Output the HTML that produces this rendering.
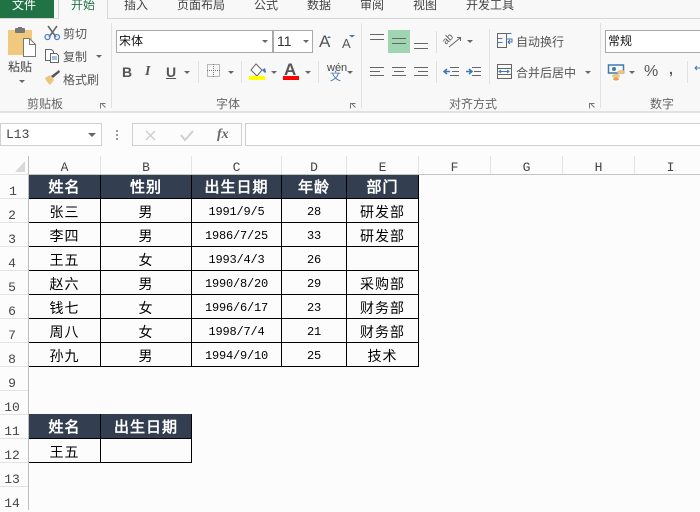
<!DOCTYPE html>
<html><head><meta charset="utf-8"><style>
html,body{margin:0;padding:0}
body{width:700px;height:510px;overflow:hidden;background:#fcfcfc;position:relative;font-family:"Liberation Sans","Noto Sans CJK SC",sans-serif;color:#444}
.t{position:absolute;white-space:nowrap;font-size:12px;line-height:16px;color:#444}
.tab{position:absolute;top:-4px;font-size:12px;line-height:18px;color:#444;white-space:nowrap}
.a{position:absolute;width:0;height:0;border-left:3px solid transparent;border-right:3px solid transparent;border-top:3px solid #666}
.r{position:absolute}
.c{position:absolute;text-align:center;font-family:"WenQuanYi Zen Hei","Liberation Sans",sans-serif;font-size:14px;letter-spacing:1px;color:#000;height:23px;line-height:26px;white-space:nowrap}
.h{color:#fff;font-weight:bold;font-size:15px;letter-spacing:1px;line-height:25px}
.d{font-size:12px;font-family:"Liberation Mono","DejaVu Sans Mono",monospace;letter-spacing:-.2px}
.hd{position:absolute;text-align:center;font-family:"Liberation Mono",monospace;font-size:13px;color:#444;line-height:16px}
.sv{position:absolute;left:0;top:0}
</style></head><body>
<div class="r" style="left:0;top:0;width:700px;height:112px;background:#f8f8f8"></div>
<div class="r" style="left:0;top:18px;width:700px;height:1px;background:#d6d6d6"></div>
<div class="r" style="left:0;top:111px;width:700px;height:2px;background:#e2e2e2"></div>
<div class="r" style="left:0;top:0;width:54px;height:18px;background:#217346"></div>
<div class="tab" style="left:12px;color:#fff">文件</div>
<div class="r" style="left:58px;top:0;width:50px;height:19px;background:#f8f8f8;border-left:1px solid #d6d6d6;border-right:1px solid #d6d6d6;box-sizing:border-box"></div>
<div class="tab" style="left:71px;color:#217346">开始</div>
<div class="tab" style="left:124px">插入</div>
<div class="tab" style="left:177px">页面布局</div>
<div class="tab" style="left:254px">公式</div>
<div class="tab" style="left:307px">数据</div>
<div class="tab" style="left:360px">审阅</div>
<div class="tab" style="left:413px">视图</div>
<div class="tab" style="left:466px">开发工具</div>

<svg class="sv" width="700" height="112" viewBox="0 0 700 112">
<g fill="#e0e0e0"><rect x="111" y="23" width="1" height="85"/><rect x="361" y="23" width="1" height="85"/><rect x="600" y="23" width="1" height="85"/>
<rect x="198" y="61" width="1" height="22"/><rect x="241" y="61" width="1" height="22"/><rect x="318" y="61" width="1" height="22"/><rect x="436" y="31" width="1" height="22"/><rect x="436" y="61" width="1" height="22"/><rect x="489" y="29" width="1" height="55"/><rect x="687" y="61" width="1" height="22"/></g>
<path d="M8 30h24v25H8z" fill="#f0c97f"/><rect x="15" y="28" width="10" height="5" rx="1" fill="#777"/><rect x="18" y="27" width="4" height="3" fill="#777"/>
<path d="M23.500 38.500h6l6 6v12h-12z" fill="#fff" stroke="#777"/><path d="M29.500 38.500v6h6" fill="none" stroke="#777"/>
<path d="M48 26l8 11M57 26l-8 11" stroke="#666" stroke-width="1.500" fill="none"/><circle cx="47.500" cy="37" r="2.500" fill="none" stroke="#4a86c5" stroke-width="1.300"/><circle cx="57" cy="37" r="2.500" fill="none" stroke="#4a86c5" stroke-width="1.300"/>
<path d="M45.500 49.500h6l2 2v9h-8z" fill="#fff" stroke="#666"/><path d="M50.500 53.500h6l2 2v7h-8z" fill="#fff" stroke="#666"/><path d="M52 57h5M52 59h5" stroke="#4a86c5"/>
<path d="M51 76l8-6 1 2-7 6z" fill="#555"/><path d="M45 78l5-3 4 5-4 5c-2-2-4-4-5-7z" fill="#edc57c"/>
<g fill="none" stroke="#777"><path d="M100.500 108.500v-5h5M102 104l3.500 3.500"/><path d="M350.500 108.500v-5h5M352 104l3.500 3.500"/><path d="M589.500 108.500v-5h5M591 104l3.500 3.500"/></g>
<rect x="116.500" y="30.500" width="156" height="22" fill="#fff" stroke="#a9a9a9"/><rect x="273.500" y="30.500" width="39" height="22" fill="#fff" stroke="#a9a9a9"/>
<rect x="605.500" y="30.500" width="110" height="22" fill="#fff" stroke="#a9a9a9"/>
<rect x="207.500" y="64.500" width="12" height="12" fill="none" stroke="#777" stroke-dasharray="1 1"/><path d="M207 70.500h13M213.500 64v13" stroke="#777" stroke-dasharray="1 1"/>
<path d="M256 64l6 6-5 6-6-6z" fill="#fff" stroke="#666"/><path d="M262 70l3-2 1 4-1 1z" fill="#3f78b5"/><rect x="249" y="76" width="16" height="4" fill="#ff0"/>
<rect x="283" y="76" width="16" height="4" fill="#f00"/>
<rect x="388" y="30" width="22" height="23" fill="#a0d5b2"/>
<g stroke="#666"><path d="M370 34.500h14M370 39.500h14M392 38.500h14M392 43.500h14M414 43.500h14M414 48.500h14"/>
<path d="M370 67.500h14M370 71.500h10M370 75.500h14M392 67.500h14M394 71.500h10M392 75.500h14M414 67.500h14M418 71.500h10M414 75.500h14"/>
<path d="M450 67.500h9M452 71.500h7M450 75.500h9M472 67.500h9M474 71.500h7M472 75.500h9"/></g>
<path d="M444 71.500h6M447 69l-3 2.500 3 2.500" stroke="#3f78b5" stroke-width="1.500" fill="none"/><path d="M466 71.500h6M469 69l3 2.500-3 2.500" stroke="#3f78b5" stroke-width="1.500" fill="none"/>
<text x="446" y="45" font-size="10" fill="#555" font-family="Liberation Sans" transform="rotate(-45 446 45)">ab</text>
<path d="M449 47l11-9M457 37.500h3.500v3.500" stroke="#666" fill="none"/>
<path d="M497.500 33.500h14M497.500 38.500h5M497.500 42.500h5" stroke="#3f78b5" fill="none"/><rect x="497.500" y="33.500" width="9" height="14" fill="none" stroke="#666"/><path d="M506 39h6v3h-4M510 40l-2 2 2 2" stroke="#3f78b5" fill="none"/>
<rect x="497.500" y="64.500" width="14" height="14" fill="none" stroke="#666"/><path d="M497 68.500h15M497 74.500h15" stroke="#666"/><path d="M499 71.500h10M501 70l-2 1.500 2 1.500M507 70l2 1.500-2 1.500" stroke="#3f78b5" fill="none"/>
<rect x="608.500" y="65" width="15" height="8" fill="none" stroke="#3f78b5" stroke-width="1.500"/><circle cx="614" cy="69" r="2" fill="#3f78b5"/><ellipse cx="621" cy="72" rx="4" ry="2" fill="#edc57c"/><ellipse cx="616" cy="76" rx="4" ry="2" fill="#edc57c"/><ellipse cx="616" cy="79" rx="3" ry="1.500" fill="#e0a64f"/>
<path d="M695 68h5M697 66l-2 2 2 2" stroke="#3f78b5" fill="none"/>
<path d="M329 36l-2 2h4zM349 35h6l-3 2.500z" fill="#3f78b5"/>
</svg>

<div class="a" style="left:19px;top:80px"></div><div class="a" style="left:96px;top:55px"></div>
<div class="a" style="left:184px;top:71px"></div><div class="a" style="left:228px;top:71px"></div><div class="a" style="left:262px;top:40px"></div><div class="a" style="left:303px;top:40px"></div>
<div class="a" style="left:271px;top:71px"></div><div class="a" style="left:305px;top:71px"></div><div class="a" style="left:347px;top:71px"></div><div class="a" style="left:467px;top:40px"></div><div class="a" style="left:585px;top:71px"></div><div class="a" style="left:629px;top:71px"></div>
<div class="t" style="left:8px;top:59px">粘贴</div>
<div class="t" style="left:63px;top:26px;color:#555">剪切</div>
<div class="t" style="left:63px;top:49px;color:#555">复制</div>
<div class="t" style="left:63px;top:72px;color:#555">格式刷</div>
<div class="t" style="left:27px;top:96px;color:#666">剪贴板</div>
<div class="t" style="left:216px;top:96px;color:#666">字体</div>
<div class="t" style="left:449px;top:96px;color:#666">对齐方式</div>
<div class="t" style="left:650px;top:96px;color:#666">数字</div>
<div class="t" style="left:119px;top:33px;color:#111">宋体</div>
<div class="t" style="left:277px;top:33px;font-size:14px;color:#333">11</div>
<div class="t" style="left:319px;top:34px;font-size:17px;color:#555">A</div>
<div class="t" style="left:342px;top:36px;font-size:13px;color:#555">A</div>
<div class="t" style="left:122px;top:64px;font-size:14px;font-weight:bold;color:#555">B</div>
<div class="t" style="left:145px;top:64px;font-size:14px;font-style:italic;font-family:'Liberation Serif',serif;font-weight:bold;color:#555">I</div>
<div class="t" style="left:166px;top:64px;font-size:14px;font-weight:bold;text-decoration:underline;color:#555">U</div>
<div class="t" style="left:284px;top:62px;font-size:17px;font-weight:bold;color:#555">A</div>
<div class="t" style="left:327px;top:62px;font-size:11px;line-height:12px;color:#444">wén</div>
<div class="t" style="left:330px;top:71px;font-size:11px;line-height:12px;color:#3f78b5">文</div>
<div class="t" style="left:516px;top:34px;color:#555">自动换行</div>
<div class="t" style="left:516px;top:65px;color:#555">合并后居中</div>
<div class="t" style="left:608px;top:33px;color:#111">常规</div>
<div class="t" style="left:644px;top:64px;font-size:16px;color:#555">%</div>
<div class="t" style="left:669px;top:61px;font-size:14px;font-weight:bold;color:#555">,</div>

<div class="r" style="left:0;top:113px;width:700px;height:43px;background:#fcfcfc"></div>
<div class="r" style="left:0;top:123px;width:102px;height:23px;box-sizing:border-box;border:1px solid #d0d0d0;background:#fff;font:13px/21px 'Liberation Mono',monospace;padding-left:5px;color:#444">L13</div>
<div class="a" style="left:88px;top:133px;border-left-width:4px;border-right-width:4px;border-top-width:4px"></div>
<div class="r" style="left:116px;top:130px;width:2px;height:2px;background:#999;box-shadow:0 4px #999,0 8px #999"></div>
<div class="r" style="left:132px;top:123px;width:110px;height:23px;box-sizing:border-box;border:1px solid #d0d0d0;background:#fcfcfc"></div>
<div class="r" style="left:245px;top:123px;width:470px;height:23px;box-sizing:border-box;border:1px solid #d0d0d0;background:#fff"></div>
<svg class="sv" width="700" height="156" style="pointer-events:none"><path d="M146 131l9 9M155 131l-9 9" stroke="#cfcfcf" stroke-width="1.500" fill="none"/><path d="M181 135l4 5 8-9" stroke="#cfcfcf" stroke-width="2" fill="none"/></svg>
<div class="t" style="left:217px;top:127px;font:italic bold 14px/16px 'Liberation Serif',serif;color:#666">fx</div>

<svg class="sv" width="700" height="510" style="top:0">
<g fill="#e3e3e3">
<rect x="0" y="174" width="28" height="1"/><rect x="0" y="198" width="28" height="1"/><rect x="0" y="222" width="28" height="1"/><rect x="0" y="246" width="28" height="1"/><rect x="0" y="270" width="28" height="1"/><rect x="0" y="294" width="28" height="1"/><rect x="0" y="318" width="28" height="1"/><rect x="0" y="342" width="28" height="1"/><rect x="0" y="366" width="28" height="1"/><rect x="0" y="390" width="28" height="1"/><rect x="0" y="414" width="28" height="1"/><rect x="0" y="438" width="28" height="1"/><rect x="0" y="462" width="28" height="1"/><rect x="0" y="486" width="28" height="1"/>
<rect x="100" y="156" width="1" height="18"/><rect x="191" y="156" width="1" height="18"/><rect x="281" y="156" width="1" height="18"/><rect x="346" y="156" width="1" height="18"/><rect x="418" y="156" width="1" height="18"/><rect x="490" y="156" width="1" height="18"/><rect x="562" y="156" width="1" height="18"/><rect x="634" y="156" width="1" height="18"/>
</g>
<rect x="28" y="156" width="1" height="354" fill="#bdbdbd"/><rect x="28" y="174" width="672" height="1" fill="#c4c4c4"/>
<path d="M25 161v11H15z" fill="#d9d9d9"/>
</svg>
<div class="hd" style="left:29px;top:160px;width:71px">A</div><div class="hd" style="left:101px;top:160px;width:90px">B</div><div class="hd" style="left:192px;top:160px;width:89px">C</div><div class="hd" style="left:282px;top:160px;width:64px">D</div><div class="hd" style="left:347px;top:160px;width:71px">E</div><div class="hd" style="left:419px;top:160px;width:71px">F</div><div class="hd" style="left:491px;top:160px;width:71px">G</div><div class="hd" style="left:563px;top:160px;width:71px">H</div><div class="hd" style="left:635px;top:160px;width:71px">I</div>
<div class="hd" style="left:0;top:184px;width:26px">1</div><div class="hd" style="left:0;top:208px;width:24px">2</div><div class="hd" style="left:0;top:232px;width:24px">3</div><div class="hd" style="left:0;top:256px;width:24px">4</div><div class="hd" style="left:0;top:280px;width:24px">5</div><div class="hd" style="left:0;top:304px;width:24px">6</div><div class="hd" style="left:0;top:328px;width:24px">7</div><div class="hd" style="left:0;top:352px;width:24px">8</div><div class="hd" style="left:0;top:376px;width:24px">9</div><div class="hd" style="left:0;top:400px;width:24px">10</div><div class="hd" style="left:0;top:424px;width:24px">11</div><div class="hd" style="left:0;top:448px;width:24px">12</div><div class="hd" style="left:0;top:472px;width:24px">13</div><div class="hd" style="left:0;top:496px;width:24px">14</div>

<div class="r" style="left:29px;top:175px;width:390px;height:24px;background:#333f50"></div>
<div class="c h" style="left:29px;top:175px;width:71px">姓名</div><div class="c h" style="left:101px;top:175px;width:90px">性别</div><div class="c h" style="left:192px;top:175px;width:89px">出生日期</div><div class="c h" style="left:282px;top:175px;width:64px">年龄</div><div class="c h" style="left:347px;top:175px;width:71px">部门</div>

<div class="c" style="left:29px;top:199px;width:71px">张三</div><div class="c" style="left:101px;top:199px;width:90px">男</div><div class="c d" style="left:192px;top:199px;width:89px">1991/9/5</div><div class="c d" style="left:282px;top:199px;width:64px">28</div><div class="c" style="left:347px;top:199px;width:71px">研发部</div>
<div class="c" style="left:29px;top:223px;width:71px">李四</div><div class="c" style="left:101px;top:223px;width:90px">男</div><div class="c d" style="left:192px;top:223px;width:89px">1986/7/25</div><div class="c d" style="left:282px;top:223px;width:64px">33</div><div class="c" style="left:347px;top:223px;width:71px">研发部</div>
<div class="c" style="left:29px;top:247px;width:71px">王五</div><div class="c" style="left:101px;top:247px;width:90px">女</div><div class="c d" style="left:192px;top:247px;width:89px">1993/4/3</div><div class="c d" style="left:282px;top:247px;width:64px">26</div>
<div class="c" style="left:29px;top:271px;width:71px">赵六</div><div class="c" style="left:101px;top:271px;width:90px">男</div><div class="c d" style="left:192px;top:271px;width:89px">1990/8/20</div><div class="c d" style="left:282px;top:271px;width:64px">29</div><div class="c" style="left:347px;top:271px;width:71px">采购部</div>
<div class="c" style="left:29px;top:295px;width:71px">钱七</div><div class="c" style="left:101px;top:295px;width:90px">女</div><div class="c d" style="left:192px;top:295px;width:89px">1996/6/17</div><div class="c d" style="left:282px;top:295px;width:64px">23</div><div class="c" style="left:347px;top:295px;width:71px">财务部</div>
<div class="c" style="left:29px;top:319px;width:71px">周八</div><div class="c" style="left:101px;top:319px;width:90px">女</div><div class="c d" style="left:192px;top:319px;width:89px">1998/7/4</div><div class="c d" style="left:282px;top:319px;width:64px">21</div><div class="c" style="left:347px;top:319px;width:71px">财务部</div>
<div class="c" style="left:29px;top:343px;width:71px">孙九</div><div class="c" style="left:101px;top:343px;width:90px">男</div><div class="c d" style="left:192px;top:343px;width:89px">1994/9/10</div><div class="c d" style="left:282px;top:343px;width:64px">25</div><div class="c" style="left:347px;top:343px;width:71px">技术</div>

<div class="r" style="left:29px;top:414px;width:163px;height:24px;background:#333f50"></div>
<div class="c h" style="left:29px;top:415px;width:71px">姓名</div><div class="c h" style="left:101px;top:415px;width:90px">出生日期</div>
<div class="c" style="left:29px;top:439px;width:71px">王五</div>

<svg class="sv" width="700" height="510">
<g fill="#000">
<rect x="29" y="198" width="390" height="1"/><rect x="29" y="222" width="390" height="1"/><rect x="29" y="246" width="390" height="1"/><rect x="29" y="270" width="390" height="1"/><rect x="29" y="294" width="390" height="1"/><rect x="29" y="318" width="390" height="1"/><rect x="29" y="342" width="390" height="1"/><rect x="29" y="366" width="390" height="1"/>
<rect x="100" y="175" width="1" height="192"/><rect x="191" y="175" width="1" height="192"/><rect x="281" y="175" width="1" height="192"/><rect x="346" y="175" width="1" height="192"/><rect x="418" y="175" width="1" height="192"/>
<rect x="29" y="438" width="163" height="1"/><rect x="29" y="462" width="163" height="1"/><rect x="100" y="414" width="1" height="49"/><rect x="191" y="414" width="1" height="49"/>
</g>
</svg>
</body></html>
